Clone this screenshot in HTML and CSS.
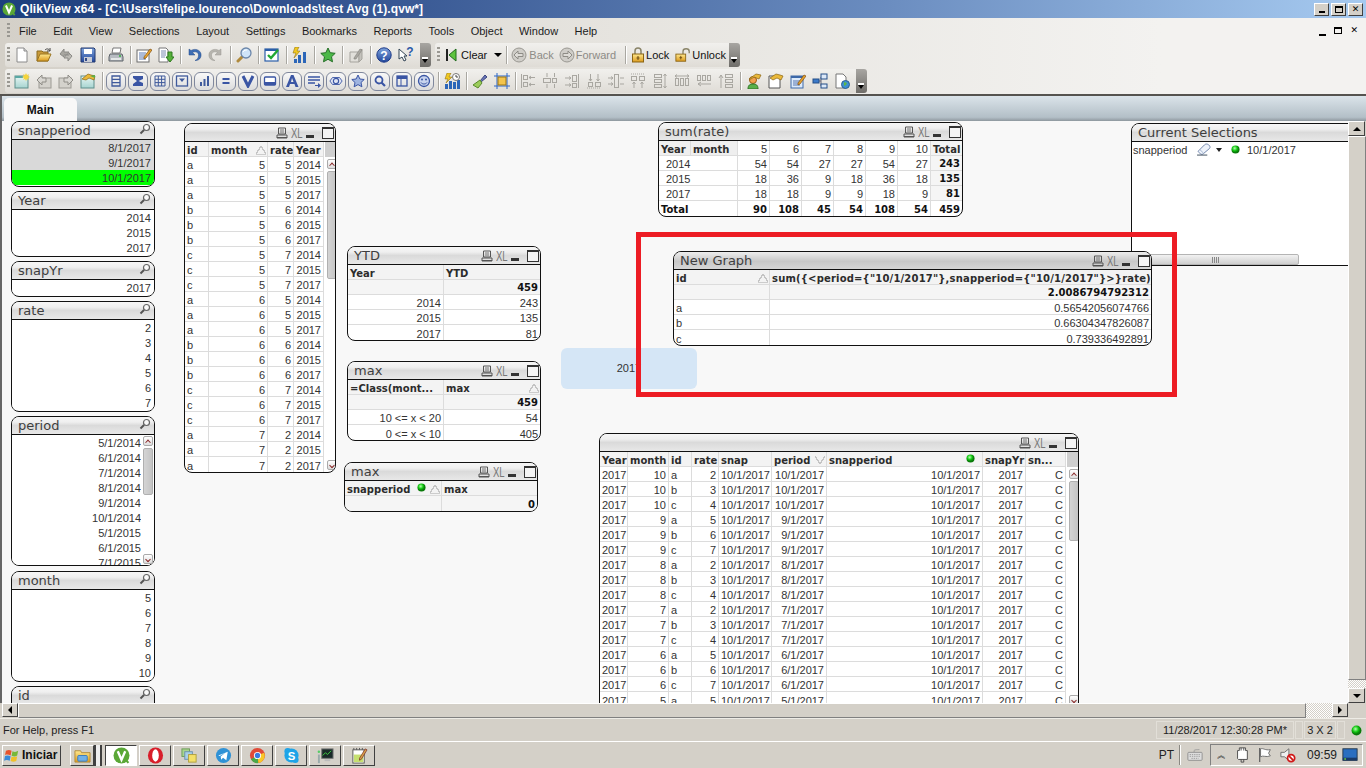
FILE: index.html
```html
<!DOCTYPE html>
<html lang="en">
<head>
<meta charset="utf-8">
<title>QlikView</title>
<link rel="stylesheet" href="styles.css">
</head>
<body>
<svg class="defs" aria-hidden="true">
<defs>
<linearGradient id="gYel" x1="0" y1="0" x2="0" y2="1"><stop offset="0" stop-color="#ffe98f"/><stop offset="1" stop-color="#dc9a1e"/></linearGradient>
<linearGradient id="gBlu" x1="0" y1="0" x2="0" y2="1"><stop offset="0" stop-color="#7fa4dd"/><stop offset="1" stop-color="#22479c"/></linearGradient>
<linearGradient id="gTeal" x1="0" y1="0" x2="0" y2="1"><stop offset="0" stop-color="#e8f6f4"/><stop offset="1" stop-color="#a6d4d0"/></linearGradient>
<symbol id="doc" viewBox="0 0 16 16"><path d="M3 1h7l3 3v11H3z" fill="#fff" stroke="#8a8a8a"/><path d="M10 1v3h3" fill="#ddd" stroke="#8a8a8a"/></symbol>
<symbol id="open" viewBox="0 0 16 16"><path d="M1 4h5l1 1h5v9H1z" fill="#c99a3a" stroke="#8a6a20"/><path d="M1 14l3-7h11l-3 7z" fill="url(#gYel)" stroke="#9a7420"/><path d="M9 3c2-2 4-1 5 1M14 1v3h-3" fill="none" stroke="#444"/></symbol>
<symbol id="sync" viewBox="0 0 16 16"><path d="M2 7l4-5v3h5l-2 3H6v2z" fill="#a8a6a0" stroke="#8b8a86"/><path d="M14 9l-4 5v-3H6l2-3h3V6z" fill="#bdbbb5" stroke="#8b8a86"/></symbol>
<symbol id="save" viewBox="0 0 16 16"><path d="M1 1h13l1 1v13H1z" fill="url(#gBlu)" stroke="#23386e"/><rect x="4" y="2" width="8" height="5" fill="#fff"/><rect x="4" y="10" width="8" height="5" fill="#c8ccd6"/><rect x="5" y="11" width="2" height="3" fill="#334a86"/></symbol>
<symbol id="print" viewBox="0 0 16 16"><path d="M5 1h8l-1 5H4z" fill="#fff" stroke="#777"/><path d="M2 7h12l1 3v4H1v-4z" fill="#b8bcc2" stroke="#5c6268"/><rect x="3" y="11" width="10" height="2" fill="#e5e8e8"/><circle cx="12" cy="9" r="1" fill="#33b13c"/></symbol>
<symbol id="edit" viewBox="0 0 16 16"><rect x="1" y="3" width="12" height="12" fill="#fff" stroke="#6c6c6c"/><path d="M3 6h7M3 8h6M3 10h5M3 12h7" stroke="#5877b0"/><path d="M8 10l6-8 2 1-6 8-2 1z" fill="#e9a42c" stroke="#7a4a12" stroke-width=".7"/></symbol>
<symbol id="docdown" viewBox="0 0 16 16"><path d="M1 1h7l2 2v12H1z" fill="#fff" stroke="#777"/><path d="M3 4h5M3 6h5M3 8h5M3 10h4" stroke="#7a8ab0"/><path d="M10 5h4v5h2l-4 5-4-5h2z" fill="#56b03a" stroke="#2f7a20"/></symbol>
<symbol id="undo" viewBox="0 0 16 16"><path d="M3 2v6h6L6.500 5.500C9 4 13 5 12.500 9c-.2 2-1.500 3.500-3.500 4.500 4 .2 6.500-2.500 6-6.500C14.500 3 9 1 5 3.500z" fill="#3d6db5" stroke="#254a86" stroke-width=".5"/></symbol>
<symbol id="redo" viewBox="0 0 16 16"><path d="M13 2v6H7l2.500-2.500C7 4 3 5 3.500 9c.2 2 1.500 3.500 3.500 4.500-4 .2-6.500-2.500-6-6.500C1.500 3 7 1 11 3.500z" fill="#b6b4ae" stroke="#989690" stroke-width=".5"/></symbol>
<symbol id="find" viewBox="0 0 16 16"><path d="M6 10l-4 4" stroke="#b08a3c" stroke-width="3" stroke-linecap="round"/><circle cx="10" cy="6" r="5" fill="#cfe4f8" stroke="#6b86aa" stroke-width="1.300"/><path d="M7 5c1-2 3-2 4-2" stroke="#fff" fill="none"/></symbol>
<symbol id="check" viewBox="0 0 16 16"><rect x="1" y="2" width="13" height="12" fill="#fff" stroke="#2b5ea8" stroke-width="1.200"/><rect x="1" y="2" width="13" height="2" fill="#2b5ea8"/><path d="M4 8l3 3 7-8" fill="none" stroke="#21a832" stroke-width="2.400"/></symbol>
<symbol id="bars" viewBox="0 0 16 16"><path d="M3 0h4L5 4h3L2 11l2-5H1z" fill="#f0c820" stroke="#94761a" stroke-width=".6"/><rect x="2" y="12" width="3" height="4" fill="#2c66b8"/><rect x="6" y="8" width="3" height="8" fill="#2c66b8"/><rect x="11" y="5" width="3" height="11" fill="#2c66b8"/></symbol>
<symbol id="star" viewBox="0 0 16 16"><path d="M8 1l2.200 4.700 5 .6-3.700 3.500 1 5L8 12.300 3.500 14.800l1-5L.8 6.300l5-.6z" fill="#4cb848" stroke="#246e26"/></symbol>
<symbol id="pencilg" viewBox="0 0 16 16"><path d="M2 5h9v10H2z" fill="#e1dfda" stroke="#a5a39d"/><path d="M11 5l3-3v10l-3 3z" fill="#c4c2bc" stroke="#a5a39d"/><path d="M6 11l6-9 2 1-6 9-2 0z" fill="#aaa8a2" stroke="#85837e" stroke-width=".6"/></symbol>
<symbol id="help" viewBox="0 0 16 16"><circle cx="8" cy="8" r="7.200" fill="url(#gBlu)" stroke="#1d3a88"/><text x="8" y="12.500" font-family="Liberation Sans" font-weight="700" font-size="12" text-anchor="middle" fill="#fff">?</text></symbol>
<symbol id="whatq" viewBox="0 0 16 16"><path d="M1 2v10l3-2 2 4 2-1-2-4h3z" fill="#fff" stroke="#345"/><text x="12" y="9" font-family="Liberation Sans" font-weight="700" font-size="12" text-anchor="middle" fill="#2c5aa8">?</text></symbol>
<symbol id="clearic" viewBox="0 0 16 16"><rect x="3" y="2" width="2" height="12" fill="#222"/><path d="M13 2v12L6 8z" fill="#5ec43e" stroke="#1e6a1c"/></symbol>
<symbol id="backic" viewBox="0 0 16 16"><circle cx="8" cy="8" r="7" fill="#cfcdc8" stroke="#9a9892"/><path d="M3 8l4-4v2.500h5v3H7V12z" fill="#dedcd7" stroke="#8e8c86"/></symbol>
<symbol id="fwdic" viewBox="0 0 16 16"><circle cx="8" cy="8" r="7" fill="#cfcdc8" stroke="#9a9892"/><path d="M13 8L9 4v2.500H4v3h5V12z" fill="#dedcd7" stroke="#8e8c86"/></symbol>
<symbol id="lock" viewBox="0 0 16 16"><path d="M5 7V4c0-4 6-4 6 0v3" fill="none" stroke="#8a8468" stroke-width="1.500"/><rect x="2.500" y="7" width="11" height="8" fill="url(#gYel)" stroke="#8a6414"/><path d="M8 9v4M6.500 11h3" stroke="#6b4a10"/></symbol>
<symbol id="unlock" viewBox="0 0 18 16"><path d="M9 7V4c0-4 7-4 7 0v2" fill="none" stroke="#8a8468" stroke-width="1.500"/><rect x="1" y="7" width="11" height="8" fill="url(#gYel)" stroke="#8a6414"/><path d="M6.500 9v4M5 11h3" stroke="#6b4a10"/></symbol>
<symbol id="shnew" viewBox="0 0 16 16"><rect x="1" y="3" width="13" height="12" fill="url(#gTeal)" stroke="#5f8f8c"/><rect x="1" y="3" width="8" height="2" fill="#5aa8a4"/><path d="M12 0l1 2 2-1-1 2 2 1-2 1 1 2-2-1-1 2-1-2-2 1 1-2-2-1 2-1-1-2 2 1z" fill="#f5d43c"/></symbol>
<symbol id="gleft" viewBox="0 0 16 16"><rect x="3" y="5" width="12" height="10" fill="#d4d2cc" stroke="#9c9a94"/><path d="M1 7l5-5v3h4v4H6v3z" fill="#d9d7d2" stroke="#8f8d87"/></symbol>
<symbol id="gright" viewBox="0 0 16 16"><rect x="1" y="5" width="12" height="10" fill="#d4d2cc" stroke="#9c9a94"/><path d="M15 7l-5-5v3H6v4h4v3z" fill="#d9d7d2" stroke="#8f8d87"/></symbol>
<symbol id="shhand" viewBox="0 0 16 16"><rect x="1" y="3" width="13" height="12" fill="url(#gTeal)" stroke="#5f8f8c"/><path d="M2 6l6-5 3 1 4 1-1 4-5-2-3 2z" fill="#eab93a" stroke="#8a6414" stroke-width=".7"/><path d="M10 3l5-1v3z" fill="#58b04a"/></symbol>
<symbol id="c-list" viewBox="0 0 14 14"><path d="M3 2h8v10H3zM3 5.300h8M3 8.600h8" fill="none" stroke="#3f5a9c" stroke-width="1.300"/></symbol>
<symbol id="c-sum" viewBox="0 0 14 14"><path d="M2 2h10v3L7.500 7 12 9v3H2v-2l4-3-4-3z" fill="#3a55a4"/></symbol>
<symbol id="c-grid" viewBox="0 0 14 14"><path d="M2 2h10v10H2zM2 5.300h10M2 8.600h10M5.300 2v10M8.600 2v10" fill="none" stroke="#3f5a9c"/></symbol>
<symbol id="c-mbox" viewBox="0 0 14 14"><rect x="1.500" y="2" width="11" height="10" fill="none" stroke="#3f5a9c" stroke-width="1.300"/><path d="M4 4.500h6L7 8z" fill="#3f5a9c"/></symbol>
<symbol id="c-chart" viewBox="0 0 14 14"><rect x="3" y="8" width="2" height="4" fill="#3f5a9c"/><rect x="6.500" y="5" width="2" height="7" fill="#3f5a9c"/><rect x="10" y="2" width="2" height="10" fill="#3f5a9c"/></symbol>
<symbol id="c-eq" viewBox="0 0 14 14"><path d="M3.500 5h7M3.500 9h7" stroke="#3a55a4" stroke-width="1.800"/></symbol>
<symbol id="c-v" viewBox="0 0 14 14"><path d="M2 2l5 10 5-10" fill="none" stroke="#3a55a4" stroke-width="3"/></symbol>
<symbol id="c-btn" viewBox="0 0 14 14"><rect x="1.500" y="3" width="11" height="8" rx="1" fill="#fff" stroke="#3a55a4" stroke-width="1.300"/><rect x="1.500" y="8" width="11" height="3" fill="#3a55a4"/></symbol>
<symbol id="c-a" viewBox="0 0 14 14"><path d="M1 13L6 1h2.500l5 12h-3l-1-3H5l-1 3zM6 8h2.500L7 4z" fill="#3a55a4" fill-rule="evenodd"/></symbol>
<symbol id="c-input" viewBox="0 0 14 14"><path d="M1 3h12M1 6h12M1 9h7" stroke="#3a55a4" stroke-width="1.300"/><path d="M8 11h3V9l3 2.500L11 14v-2H8z" fill="#3a55a4"/></symbol>
<symbol id="c-six" viewBox="0 0 16 14"><path d="M1 7l3-4h8l3 4-3 4H4z" fill="#dfe4f4" stroke="#3a55a4"/><circle cx="8" cy="7" r="3" fill="none" stroke="#3a55a4" stroke-width="1.300"/></symbol>
<symbol id="c-star" viewBox="0 0 14 14"><path d="M7 1l1.900 4 4.300.5-3.200 3 .9 4.300L7 10.600l-3.900 2.200.9-4.300-3.200-3 4.300-.5z" fill="#9fb4e0" stroke="#3a55a4"/></symbol>
<symbol id="c-find" viewBox="0 0 14 14"><circle cx="6" cy="6" r="3.500" fill="none" stroke="#3a55a4" stroke-width="1.800"/><path d="M8.500 8.500l3.500 3.500" stroke="#3a55a4" stroke-width="2.200"/></symbol>
<symbol id="c-cont" viewBox="0 0 14 14"><rect x="2" y="2" width="10" height="10" fill="none" stroke="#3a55a4" stroke-width="1.300"/><rect x="2" y="2" width="10" height="3" fill="#3a55a4"/><path d="M6 5v7" stroke="#3a55a4"/></symbol>
<symbol id="c-smile" viewBox="0 0 14 14"><circle cx="7" cy="7" r="5.500" fill="#c8d4ee" stroke="#3a55a4" stroke-width="1.300"/><circle cx="5" cy="5.500" r="1" fill="#3a55a4"/><circle cx="9" cy="5.500" r="1" fill="#3a55a4"/><path d="M4 8.500c1 2 5 2 6 0" fill="none" stroke="#3a55a4"/></symbol>
<symbol id="barsclk" viewBox="0 0 16 16"><path d="M3 0h4L5 4h3L2 10l2-4H1z" fill="#f0c820" stroke="#94761a" stroke-width=".6"/><rect x="1" y="11" width="3" height="5" fill="#2c66b8"/><rect x="5" y="8" width="3" height="8" fill="#2c66b8"/><rect x="9" y="9" width="3" height="7" fill="#2c66b8"/><rect x="13" y="7" width="3" height="9" fill="#2c66b8"/><circle cx="12" cy="4" r="3.500" fill="#fff" stroke="#777"/><path d="M12 2v2h2" stroke="#444" fill="none"/></symbol>
<symbol id="brush" viewBox="0 0 16 16"><path d="M8 8l5-6 2 2-6 5z" fill="#6a76b8" stroke="#3c4680"/><path d="M8 7l2 3-4 5-5-3z" fill="#9ccc5a" stroke="#5a8a2c"/></symbol>
<symbol id="selbox" viewBox="0 0 16 16"><path d="M3 0v16M13 0v16M0 3h16M0 13h16" stroke="#2c66c8"/><rect x="4" y="4" width="8" height="8" fill="#f4c44c" stroke="#9a7414"/></symbol>
<symbol id="a1" viewBox="0 0 16 16"><g fill="none" stroke="#a9a7a1"><path d="M1.500 1v14"/><rect x="3.500" y="2.500" width="4" height="4"/><rect x="3.500" y="9.500" width="4" height="4"/><path d="M15 4.500H9M15 11.500H9M11 3l-2 1.500 2 1.500M11 10l-2 1.500 2 1.500"/></g></symbol>
<symbol id="a2" viewBox="0 0 16 16"><g fill="none" stroke="#a9a7a1"><rect x="1.500" y="5.500" width="7" height="4"/><rect x="10.500" y="5.500" width="4" height="4"/><path d="M5 0v4M12.500 0v4M5 11v4M12.500 11v4"/></g></symbol>
<symbol id="a3" viewBox="0 0 16 16"><g fill="none" stroke="#a9a7a1"><path d="M14.500 1v14"/><rect x="8.500" y="2.500" width="4" height="6"/><rect x="8.500" y="10.500" width="4" height="4"/><path d="M1 5h6M1 12h6M5 3.500L7 5 5 6.500M5 10.500L7 12l-2 1.500"/></g></symbol>
<symbol id="a4" viewBox="0 0 16 16"><g fill="none" stroke="#a9a7a1"><path d="M1 15h14" stroke-dasharray="1 1"/><rect x="2.500" y="9.500" width="4" height="4"/><rect x="9.500" y="9.500" width="5" height="4"/><path d="M4.500 1v7M12 1v7M3 6l1.500 2L6 6M10.500 6L12 8l1.500-2"/></g></symbol>
<symbol id="a5" viewBox="0 0 16 16"><g fill="none" stroke="#a9a7a1"><rect x="6.500" y="1.500" width="4" height="13"/><path d="M0 5h5M0 11h5M3 3.500L5 5 3 6.500M3 9.500L5 11l-2 1.500M12 5h4M12 11h4"/></g></symbol>
<symbol id="a6" viewBox="0 0 16 16"><g fill="none" stroke="#a9a7a1"><path d="M1 1h14" stroke-dasharray="1 1"/><rect x="1.500" y="3.500" width="5" height="4"/><rect x="9.500" y="3.500" width="5" height="4"/><path d="M4 9v6M12 9v6M2.500 11L4 9l1.500 2M10.500 11L12 9l1.500 2"/></g></symbol>
<symbol id="a7" viewBox="0 0 16 16"><g fill="none" stroke="#a9a7a1"><rect x="2.500" y="1.500" width="7" height="3"/><rect x="2.500" y="6.500" width="7" height="3"/><rect x="2.500" y="11.500" width="7" height="3"/><path d="M13 1v14M11.500 3L13 1l1.500 2M11.500 13l1.500 2 1.500-2"/></g></symbol>
<symbol id="a8" viewBox="0 0 16 16"><g fill="none" stroke="#a9a7a1"><rect x="1.500" y="5.500" width="3" height="7"/><rect x="6.500" y="5.500" width="3" height="7"/><rect x="11.500" y="5.500" width="3" height="7"/><path d="M1 3h14M3 1.500L1 3l2 1.500M13 1.500L15 3l-2 1.500"/></g></symbol>
<symbol id="a9" viewBox="0 0 16 16"><g fill="none" stroke="#a9a7a1"><rect x="1.500" y="2.500" width="3" height="5"/><rect x="6.500" y="2.500" width="3" height="5"/><rect x="11.500" y="2.500" width="3" height="5"/><path d="M15 11H2M5 9l-3 2 3 2"/></g></symbol>
<symbol id="a10" viewBox="0 0 16 16"><g fill="none" stroke="#a9a7a1"><rect x="7.500" y="1.500" width="7" height="3"/><rect x="7.500" y="6.500" width="7" height="3"/><rect x="7.500" y="11.500" width="7" height="3"/><path d="M3 15V2M1 5l2-3 2 3"/></g></symbol>
<symbol id="user" viewBox="0 0 16 16"><circle cx="7" cy="7" r="3.500" fill="#f2a14e" stroke="#9a5a14"/><path d="M2 16c0-4 2-5 5-5s5 1 5 5z" fill="#58b04a" stroke="#2e7424"/><path d="M3 6l7-5 5 1-2 4-5-2-3 2z" fill="#eab93a" stroke="#8a6414" stroke-width=".7"/></symbol>
<symbol id="dochand" viewBox="0 0 16 16"><path d="M1 3h11v12H1z" fill="#fff" stroke="#555"/><path d="M2 5l6-4 4 1 3 1-2 4-4-2-4 2z" fill="#eab93a" stroke="#8a6414" stroke-width=".7"/></symbol>
<symbol id="note" viewBox="0 0 16 16"><rect x="1" y="3" width="12" height="12" fill="#dceafa" stroke="#3c68a8"/><rect x="1" y="3" width="12" height="2" fill="#3c68a8"/><path d="M3 8h7M3 10h6M3 12h7" stroke="#5877b0"/><path d="M8 10l6-8 2 1-6 8-2 1z" fill="#e9a42c" stroke="#7a4a12" stroke-width=".7"/></symbol>
<symbol id="netw" viewBox="0 0 16 16"><path d="M5 8h4M9 4v9" stroke="#667"/><rect x="1" y="6" width="6" height="4" fill="#3c7ac8" stroke="#244e88"/><rect x="9" y="1" width="6" height="5" fill="#dce8f8" stroke="#244e88"/><rect x="9" y="11" width="6" height="4" fill="#dce8f8" stroke="#244e88"/></symbol>
<symbol id="docglobe" viewBox="0 0 16 16"><path d="M2 1h7l3 3v11H2z" fill="#fff" stroke="#777"/><circle cx="11.500" cy="11.500" r="4" fill="#3d8fd2" stroke="#2a6090"/><path d="M10 9l3 1-1 2-2 1z" fill="#5cb848"/></symbol>
<symbol id="lens" viewBox="0 0 12 12"><circle cx="7.500" cy="4.500" r="3" fill="#fafafa" stroke="#666" stroke-width="1.200"/><path d="M5 7L1.500 10.500" stroke="#555" stroke-width="2"/></symbol>
<symbol id="printer" viewBox="0 0 12 12"><path d="M2.500 1h7v6h-7zM1 10.500h10M1 8h10v3H1z" fill="none" stroke="#555"/><path d="M4 3h4M4 5h4" stroke="#777"/></symbol>
<symbol id="qv" viewBox="0 0 16 16"><circle cx="8" cy="8" r="7.500" fill="#5aa736"/><path d="M4.500 4l3.500 8 3.500-8" fill="none" stroke="#fff" stroke-width="2.200"/><path d="M12 12l2.500 3" stroke="#5aa736" stroke-width="2"/></symbol>
<symbol id="erase" viewBox="0 0 16 14"><path d="M1.500 8.500L8 2c1.200-1.200 3-1.200 4.500 0s2 2.800.8 4L6.800 11.500c-1 1-2.300 1-3.300 0s-3-2-2-3z" fill="#eef3fb" stroke="#6a80a8"/><path d="M3 7l4 4" stroke="#9fb0cc"/><path d="M0 13h11" stroke="#345"/></symbol>
<symbol id="winlogo" viewBox="0 0 18 16"><path d="M2 3c3-1.500 4-1 6 0L7 8C5 7 3 6.500 1 7.500z" fill="#e8542c"/><path d="M9 3.500c2 1 4 1 6-.5l-1 5c-2 1.500-4 1-6 .2z" fill="#78b838"/><path d="M1 8.500c2-1 4-.7 6 .2l-1 5c-2-1-4-1.200-6 0z" fill="#3a8ad8"/><path d="M8 9c2 1 4 1 6-.2l-1 5c-2 1-4 1.200-6 0z" fill="#f0c028"/></symbol>
<symbol id="folder" viewBox="0 0 18 18"><path d="M1 4h6l1 2h9v10H1z" fill="url(#gYel)" stroke="#b08a3a"/><rect x="4" y="9" width="10" height="6" rx="1" fill="#70b0e8" stroke="#3a7ab8"/></symbol>
<symbol id="opera" viewBox="0 0 18 18"><ellipse cx="9" cy="9" rx="8" ry="8.500" fill="#d81e2a"/><ellipse cx="9" cy="9" rx="3.500" ry="6.500" fill="#fff"/></symbol>
<symbol id="cards" viewBox="0 0 18 18"><rect x="1" y="2" width="8" height="8" fill="#a8d48c" stroke="#6a9c58"/><rect x="4" y="5" width="8" height="8" fill="#a8d0e8" stroke="#6a90ac"/><rect x="8" y="8" width="8" height="8" fill="#f4e068" stroke="#b0a040"/></symbol>
<symbol id="tg" viewBox="0 0 18 18"><circle cx="9" cy="9" r="8" fill="#2f92d6"/><path d="M3.500 9l10-4-1.500 9-3.500-2.500-2 2-.5-3.500 5-4-6 3.500z" fill="#fff"/></symbol>
<symbol id="chrome" viewBox="0 0 18 18"><circle cx="9" cy="9" r="8" fill="#e04a38"/><path d="M9 9L2 13a8 8 0 0 0 8 4z" fill="#4aa84a"/><path d="M9 9l7-3a8 8 0 0 1-6 11z" fill="#f8c828"/><circle cx="9" cy="9" r="3.800" fill="#fff"/><circle cx="9" cy="9" r="2.800" fill="#3a7ae0"/></symbol>
<symbol id="skype" viewBox="0 0 18 18"><circle cx="9" cy="9" r="7.500" fill="#1ea4e8"/><circle cx="5" cy="4.500" r="3.500" fill="#1ea4e8"/><circle cx="13" cy="13.500" r="3.500" fill="#1ea4e8"/><text x="9" y="13.500" font-family="Liberation Sans" font-weight="700" font-size="12" text-anchor="middle" fill="#fff">S</text></symbol>
<symbol id="mon" viewBox="0 0 18 18"><rect x="5" y="2" width="12" height="10" fill="#1a2a28" stroke="#777"/><path d="M6 9l3-3 2 2 4-4" stroke="#40d040" fill="none"/><rect x="8" y="13" width="6" height="2" fill="#bbb"/><rect x="1" y="8" width="2" height="9" fill="#9aa"/><circle cx="2" cy="5" r="1.300" fill="#5c6"/></symbol>
<symbol id="pad" viewBox="0 0 18 18"><rect x="2" y="3" width="12" height="14" fill="#fff" stroke="#555"/><path d="M3 3v-2M6 3v-2M9 3v-2M12 3v-2" stroke="#555"/><rect x="3" y="8" width="10" height="8" fill="#c6e070"/><path d="M9 12l6-10 2 1-6 10-2 1z" fill="#d8a048" stroke="#702020" stroke-width=".7"/></symbol>
<symbol id="kbd" viewBox="0 0 18 14"><path d="M8 4V2c0-1 4-1 6-1" fill="none" stroke="#999"/><rect x="1" y="4" width="16" height="9" rx="1" fill="#ddd" stroke="#8c8c8c"/><path d="M3 6.500h12M3 8.500h12M5 10.800h8" stroke="#999" stroke-dasharray="1.500 1"/></symbol>
<symbol id="plug" viewBox="0 0 16 18"><path d="M5 1h7v3h2v10H4l-1-1V4h2z" fill="#fff" stroke="#444"/><path d="M7 1v3M10 1v3M7 14v3h3v-3" stroke="#444" fill="none"/></symbol>
<symbol id="flag" viewBox="0 0 16 18"><path d="M2 1v16" stroke="#666" stroke-width="1.500"/><path d="M3 2c3-1 5 2 11 1l-2 4 2 3c-5 2-8-1-11 1z" fill="#fff" stroke="#666"/></symbol>
<symbol id="spk" viewBox="0 0 18 18"><path d="M1 6h4l5-4v13L5 11H1z" fill="#eee" stroke="#666"/><circle cx="12.500" cy="12.500" r="4" fill="#fff" stroke="#d01818" stroke-width="2"/><path d="M10 10l5 5" stroke="#d01818" stroke-width="2"/></symbol>
<symbol id="desk" viewBox="0 0 18 16"><rect x="1" y="1" width="16" height="13" fill="#2a6ec0" stroke="#234"/><rect x="1" y="11" width="16" height="3" fill="#1a3a68"/><circle cx="3.500" cy="12.500" r="1" fill="#6c4"/></symbol>
<radialGradient id="gLed" cx=".4" cy=".35"><stop offset="0" stop-color="#b8ffb0"/><stop offset=".6" stop-color="#12c812"/><stop offset="1" stop-color="#0a7a0a"/></radialGradient>
<symbol id="led" viewBox="0 0 10 10"><circle cx="5" cy="5" r="4.500" fill="url(#gLed)"/></symbol>
</defs>
</svg>

<header class="titlebar">
  <svg class="tb-logo"><use href="#qv"/></svg>
  <span class="tb-text">QlikView x64 - [C:\Users\felipe.lourenco\Downloads\test Avg (1).qvw*]</span>
  <div class="winbtns">
    <button class="wb"><span class="g-min"></span></button>
    <button class="wb"><span class="g-rest"></span></button>
    <button class="wb"><span class="g-x">✕</span></button>
  </div>
</header>

<div class="chrome">
  <nav class="menubar">
    <span class="grip"></span>
    <span class="mi">File</span><span class="mi">Edit</span><span class="mi">View</span><span class="mi">Selections</span><span class="mi">Layout</span><span class="mi">Settings</span><span class="mi">Bookmarks</span><span class="mi">Reports</span><span class="mi">Tools</span><span class="mi">Object</span><span class="mi">Window</span><span class="mi">Help</span>
    <div class="mdi"><span class="g-min"></span><span class="g-rest"></span><span class="g-x">✕</span></div>
  </nav>

  <div class="toolrow">
    <div class="pill">
      <span class="grip"></span>
      <svg class="i"><use href="#doc"/></svg><svg class="i"><use href="#open"/></svg><svg class="i"><use href="#sync"/></svg><svg class="i"><use href="#save"/></svg><span class="sep"></span>
      <svg class="i"><use href="#print"/></svg><span class="sep"></span>
      <svg class="i"><use href="#edit"/></svg><svg class="i"><use href="#docdown"/></svg><span class="sep"></span>
      <svg class="i"><use href="#undo"/></svg><svg class="i"><use href="#redo"/></svg><span class="sep"></span>
      <svg class="i"><use href="#find"/></svg><span class="sep"></span>
      <svg class="i"><use href="#check"/></svg><span class="sep"></span>
      <svg class="i"><use href="#bars"/></svg><span class="sep"></span>
      <svg class="i"><use href="#star"/></svg><span class="sep"></span>
      <svg class="i"><use href="#pencilg"/></svg><span class="sep"></span>
      <svg class="i"><use href="#help"/></svg><svg class="i"><use href="#whatq"/></svg>
      <span class="chip"></span>
    </div>
    <div class="pill p2">
      <span class="grip"></span>
      <svg class="i"><use href="#clearic"/></svg><span class="tl">Clear</span><span class="darr"></span><span class="sep"></span>
      <svg class="i"><use href="#backic"/></svg><span class="tl dim t-back">Back</span>
      <svg class="i"><use href="#fwdic"/></svg><span class="tl dim t-fwd">Forward</span><span class="sep"></span>
      <svg class="i"><use href="#lock"/></svg><span class="tl t-lock">Lock</span>
      <svg class="i"><use href="#unlock"/></svg><span class="tl t-unlock">Unlock</span>
      <span class="chip"></span>
    </div>
  </div>

  <div class="toolrow last">
    <div class="pill">
      <span class="grip"></span>
      <svg class="i"><use href="#shnew"/></svg><svg class="i"><use href="#gleft"/></svg><svg class="i"><use href="#gright"/></svg><svg class="i"><use href="#shhand"/></svg><span class="sep"></span>
      <span class="cb"><svg><use href="#c-list"/></svg></span><span class="cb"><svg><use href="#c-sum"/></svg></span><span class="cb"><svg><use href="#c-grid"/></svg></span><span class="cb"><svg><use href="#c-mbox"/></svg></span><span class="cb"><svg><use href="#c-chart"/></svg></span><span class="cb"><svg><use href="#c-eq"/></svg></span><span class="cb"><svg><use href="#c-v"/></svg></span><span class="cb"><svg><use href="#c-btn"/></svg></span><span class="cb"><svg><use href="#c-a"/></svg></span><span class="cb"><svg><use href="#c-input"/></svg></span><span class="cb"><svg><use href="#c-six"/></svg></span><span class="cb"><svg><use href="#c-star"/></svg></span><span class="cb"><svg><use href="#c-find"/></svg></span><span class="cb"><svg><use href="#c-cont"/></svg></span><span class="cb"><svg><use href="#c-smile"/></svg></span>
      <span class="sep"></span>
      <svg class="i"><use href="#barsclk"/></svg><span class="sep"></span>
      <svg class="i"><use href="#brush"/></svg><svg class="i"><use href="#selbox"/></svg><span class="sep tight"></span>
      <svg class="i"><use href="#a1"/></svg><svg class="i"><use href="#a2"/></svg><svg class="i"><use href="#a3"/></svg><svg class="i"><use href="#a4"/></svg><svg class="i"><use href="#a5"/></svg><svg class="i"><use href="#a6"/></svg><svg class="i"><use href="#a7"/></svg><svg class="i"><use href="#a8"/></svg><svg class="i"><use href="#a9"/></svg><svg class="i"><use href="#a10"/></svg><span class="sep"></span>
      <svg class="i"><use href="#user"/></svg><svg class="i"><use href="#dochand"/></svg><svg class="i"><use href="#note"/></svg><svg class="i"><use href="#netw"/></svg><svg class="i"><use href="#docglobe"/></svg>
      <span class="chip"></span>
    </div>
  </div>
</div>

<div class="tabstrip"><div class="tab">Main</div></div>

<main class="work">
  <div class="canvas">

    <section class="obj lb o-sp"><div class="cap"><span class="capt">snapperiod</span><svg class="lens"><use href="#lens"/></svg></div>
      <div class="rows"><div class="li alt">8/1/2017</div><div class="li alt">9/1/2017</div><div class="li sel">10/1/2017</div></div></section>
    <section class="obj lb o-yr"><div class="cap"><span class="capt">Year</span><svg class="lens"><use href="#lens"/></svg></div>
      <div class="rows"><div class="li">2014</div><div class="li">2015</div><div class="li">2017</div></div></section>
    <section class="obj lb o-sy"><div class="cap"><span class="capt">snapYr</span><svg class="lens"><use href="#lens"/></svg></div>
      <div class="rows"><div class="li">2017</div></div></section>
    <section class="obj lb o-rt"><div class="cap"><span class="capt">rate</span><svg class="lens"><use href="#lens"/></svg></div>
      <div class="rows"><div class="li">2</div><div class="li">3</div><div class="li">4</div><div class="li">5</div><div class="li">6</div><div class="li">7</div></div></section>
    <section class="obj lb o-pd"><div class="cap"><span class="capt">period</span><svg class="lens"><use href="#lens"/></svg></div>
      <div class="rows scr"><div class="li">5/1/2014</div><div class="li">6/1/2014</div><div class="li">7/1/2014</div><div class="li">8/1/2014</div><div class="li">9/1/2014</div><div class="li">10/1/2014</div><div class="li">5/1/2015</div><div class="li">6/1/2015</div><div class="li">7/1/2015</div>
      <div class="lbar"><span class="sb-b up"></span><span class="sb-th h47"></span><span class="sb-b dn"></span></div></div></section>
    <section class="obj lb o-mn"><div class="cap"><span class="capt">month</span><svg class="lens"><use href="#lens"/></svg></div>
      <div class="rows"><div class="li">5</div><div class="li">6</div><div class="li">7</div><div class="li">8</div><div class="li">9</div><div class="li">10</div></div></section>
    <section class="obj lb o-id"><div class="cap"><span class="capt">id</span><svg class="lens"><use href="#lens"/></svg></div></section>

    <section class="obj o-t1"><div class="cap"><span class="ctl"><svg class="pr"><use href="#printer"/></svg><span class="xl">XL</span><span class="mn"></span><span class="mx"></span></span></div>
      <div class="split">
        <table class="tb">
          <colgroup><col class="w24"><col class="w59"><col class="w26"><col class="w30"></colgroup>
          <tr class="hd"><th>id</th><th>month<span class="sort"></span></th><th>rate</th><th>Year</th></tr>
          <tr><td>a</td><td class="r">5</td><td class="r">5</td><td class="r">2014</td></tr>
          <tr><td>a</td><td class="r">5</td><td class="r">5</td><td class="r">2015</td></tr>
          <tr><td>a</td><td class="r">5</td><td class="r">5</td><td class="r">2017</td></tr>
          <tr><td>b</td><td class="r">5</td><td class="r">6</td><td class="r">2014</td></tr>
          <tr><td>b</td><td class="r">5</td><td class="r">6</td><td class="r">2015</td></tr>
          <tr><td>b</td><td class="r">5</td><td class="r">6</td><td class="r">2017</td></tr>
          <tr><td>c</td><td class="r">5</td><td class="r">7</td><td class="r">2014</td></tr>
          <tr><td>c</td><td class="r">5</td><td class="r">7</td><td class="r">2015</td></tr>
          <tr><td>c</td><td class="r">5</td><td class="r">7</td><td class="r">2017</td></tr>
          <tr><td>a</td><td class="r">6</td><td class="r">5</td><td class="r">2014</td></tr>
          <tr><td>a</td><td class="r">6</td><td class="r">5</td><td class="r">2015</td></tr>
          <tr><td>a</td><td class="r">6</td><td class="r">5</td><td class="r">2017</td></tr>
          <tr><td>b</td><td class="r">6</td><td class="r">6</td><td class="r">2014</td></tr>
          <tr><td>b</td><td class="r">6</td><td class="r">6</td><td class="r">2015</td></tr>
          <tr><td>b</td><td class="r">6</td><td class="r">6</td><td class="r">2017</td></tr>
          <tr><td>c</td><td class="r">6</td><td class="r">7</td><td class="r">2014</td></tr>
          <tr><td>c</td><td class="r">6</td><td class="r">7</td><td class="r">2015</td></tr>
          <tr><td>c</td><td class="r">6</td><td class="r">7</td><td class="r">2017</td></tr>
          <tr><td>a</td><td class="r">7</td><td class="r">2</td><td class="r">2014</td></tr>
          <tr><td>a</td><td class="r">7</td><td class="r">2</td><td class="r">2015</td></tr>
          <tr><td>a</td><td class="r">7</td><td class="r">2</td><td class="r">2017</td></tr>
        </table>
        <div class="vbar"><span class="vhd"></span><span class="sb-b up"></span><span class="sb-th h108"></span><span class="sb-b dn"></span></div>
      </div></section>

    <section class="obj o-ytd"><div class="cap"><span class="capt">YTD</span><span class="ctl"><svg class="pr"><use href="#printer"/></svg><span class="xl">XL</span><span class="mn"></span><span class="mx"></span></span></div>
      <table class="tb fill"><colgroup><col class="w96"><col></colgroup>
        <tr class="hd"><th>Year</th><th>YTD</th></tr>
        <tr class="tot"><td></td><td class="r b">459</td></tr>
        <tr><td class="r">2014</td><td class="r">243</td></tr>
        <tr><td class="r">2015</td><td class="r">135</td></tr>
        <tr><td class="r">2017</td><td class="r">81</td></tr>
      </table></section>

    <section class="obj o-max"><div class="cap"><span class="capt">max</span><span class="ctl"><svg class="pr"><use href="#printer"/></svg><span class="xl">XL</span><span class="mn"></span><span class="mx"></span></span></div>
      <table class="tb fill"><colgroup><col class="w96"><col></colgroup>
        <tr class="hd"><th>=Class(mont...</th><th>max<span class="sort"></span></th></tr>
        <tr class="tot"><td></td><td class="r b">459</td></tr>
        <tr><td class="r">10 &lt;= x &lt; 20</td><td class="r">54</td></tr>
        <tr><td class="r">0 &lt;= x &lt; 10</td><td class="r">405</td></tr>
      </table></section>

    <section class="obj o-max2"><div class="cap"><span class="capt">max</span><span class="ctl"><svg class="pr"><use href="#printer"/></svg><span class="xl">XL</span><span class="mn"></span><span class="mx"></span></span></div>
      <table class="tb fill"><colgroup><col class="w97"><col></colgroup>
        <tr class="hd"><th>snapperiod<svg class="hled"><use href="#led"/></svg><span class="sort"></span></th><th>max</th></tr>
        <tr class="tot"><td></td><td class="r b">0</td></tr>
      </table></section>

    <div class="blue">2017</div>

    <section class="obj o-sum"><div class="cap"><span class="capt">sum(rate)</span><span class="ctl"><svg class="pr"><use href="#printer"/></svg><span class="xl">XL</span><span class="mn"></span><span class="mx"></span></span></div>
      <table class="tb fill"><colgroup><col class="w32"><col class="w47"><col class="w32"><col class="w32"><col class="w32"><col class="w32"><col class="w32"><col class="w33"><col></colgroup>
        <tr class="hd pv"><th>Year</th><th>month</th><td class="r">5</td><td class="r">6</td><td class="r">7</td><td class="r">8</td><td class="r">9</td><td class="r">10</td><th class="r">Total</th></tr>
        <tr><td colspan="2" class="ind">2014</td><td class="r">54</td><td class="r">54</td><td class="r">27</td><td class="r">27</td><td class="r">54</td><td class="r">27</td><td class="r b sh">243</td></tr>
        <tr><td colspan="2" class="ind">2015</td><td class="r">18</td><td class="r">36</td><td class="r">9</td><td class="r">18</td><td class="r">36</td><td class="r">18</td><td class="r b sh">135</td></tr>
        <tr><td colspan="2" class="ind">2017</td><td class="r">18</td><td class="r">18</td><td class="r">9</td><td class="r">9</td><td class="r">18</td><td class="r">9</td><td class="r b sh">81</td></tr>
        <tr><td colspan="2" class="b">Total</td><td class="r b">90</td><td class="r b">108</td><td class="r b">45</td><td class="r b">54</td><td class="r b">108</td><td class="r b">54</td><td class="r b">459</td></tr>
      </table></section>

    <section class="obj o-cs"><div class="cap"><span class="capt">Current Selections</span></div>
      <div class="csbody">
        <div class="csrow"><span class="csf">snapperiod</span><svg class="cse"><use href="#erase"/></svg><span class="csa"></span><svg class="csl"><use href="#led"/></svg><span>10/1/2017</span></div>
        <div class="cshs"><span class="csth"><span class="hgrip"></span></span></div>
      </div></section>

    <section class="obj o-ng"><div class="cap act"><span class="capt">New Graph</span><span class="ctl"><svg class="pr"><use href="#printer"/></svg><span class="xl">XL</span><span class="mn"></span><span class="mx"></span></span></div>
      <table class="tb fill"><colgroup><col class="w96"><col></colgroup>
        <tr class="hd"><th>id<span class="sort"></span></th><th class="wide">sum({&lt;period={"10/1/2017"},snapperiod={"10/1/2017"}&gt;}rate)</th></tr>
        <tr class="tot"><td></td><td class="r b">2.0086794792312</td></tr>
        <tr><td>a</td><td class="r">0.56542056074766</td></tr>
        <tr><td>b</td><td class="r">0.66304347826087</td></tr>
        <tr><td>c</td><td class="r">0.739336492891</td></tr>
      </table></section>

    <section class="obj o-big"><div class="cap"><span class="ctl"><svg class="pr"><use href="#printer"/></svg><span class="xl">XL</span><span class="mn"></span><span class="mx"></span></span></div>
      <div class="split">
        <table class="tb">
          <colgroup><col class="w28"><col class="w41"><col class="w23"><col class="w27"><col class="w53"><col class="w55"><col class="w156"><col class="w43"><col class="w40"></colgroup>
          <tr class="hd"><th>Year</th><th>month</th><th>id</th><th>rate</th><th>snap</th><th>period<span class="sort dn"></span></th><th>snapperiod<svg class="hled end"><use href="#led"/></svg></th><th>snapYr</th><th>sn...</th></tr>
          <tr><td class="r">2017</td><td class="r">10</td><td>a</td><td class="r">2</td><td class="r">10/1/2017</td><td class="r">10/1/2017</td><td class="r">10/1/2017</td><td class="r">2017</td><td class="r">C</td></tr>
          <tr><td class="r">2017</td><td class="r">10</td><td>b</td><td class="r">3</td><td class="r">10/1/2017</td><td class="r">10/1/2017</td><td class="r">10/1/2017</td><td class="r">2017</td><td class="r">C</td></tr>
          <tr><td class="r">2017</td><td class="r">10</td><td>c</td><td class="r">4</td><td class="r">10/1/2017</td><td class="r">10/1/2017</td><td class="r">10/1/2017</td><td class="r">2017</td><td class="r">C</td></tr>
          <tr><td class="r">2017</td><td class="r">9</td><td>a</td><td class="r">5</td><td class="r">10/1/2017</td><td class="r">9/1/2017</td><td class="r">10/1/2017</td><td class="r">2017</td><td class="r">C</td></tr>
          <tr><td class="r">2017</td><td class="r">9</td><td>b</td><td class="r">6</td><td class="r">10/1/2017</td><td class="r">9/1/2017</td><td class="r">10/1/2017</td><td class="r">2017</td><td class="r">C</td></tr>
          <tr><td class="r">2017</td><td class="r">9</td><td>c</td><td class="r">7</td><td class="r">10/1/2017</td><td class="r">9/1/2017</td><td class="r">10/1/2017</td><td class="r">2017</td><td class="r">C</td></tr>
          <tr><td class="r">2017</td><td class="r">8</td><td>a</td><td class="r">2</td><td class="r">10/1/2017</td><td class="r">8/1/2017</td><td class="r">10/1/2017</td><td class="r">2017</td><td class="r">C</td></tr>
          <tr><td class="r">2017</td><td class="r">8</td><td>b</td><td class="r">3</td><td class="r">10/1/2017</td><td class="r">8/1/2017</td><td class="r">10/1/2017</td><td class="r">2017</td><td class="r">C</td></tr>
          <tr><td class="r">2017</td><td class="r">8</td><td>c</td><td class="r">4</td><td class="r">10/1/2017</td><td class="r">8/1/2017</td><td class="r">10/1/2017</td><td class="r">2017</td><td class="r">C</td></tr>
          <tr><td class="r">2017</td><td class="r">7</td><td>a</td><td class="r">2</td><td class="r">10/1/2017</td><td class="r">7/1/2017</td><td class="r">10/1/2017</td><td class="r">2017</td><td class="r">C</td></tr>
          <tr><td class="r">2017</td><td class="r">7</td><td>b</td><td class="r">3</td><td class="r">10/1/2017</td><td class="r">7/1/2017</td><td class="r">10/1/2017</td><td class="r">2017</td><td class="r">C</td></tr>
          <tr><td class="r">2017</td><td class="r">7</td><td>c</td><td class="r">4</td><td class="r">10/1/2017</td><td class="r">7/1/2017</td><td class="r">10/1/2017</td><td class="r">2017</td><td class="r">C</td></tr>
          <tr><td class="r">2017</td><td class="r">6</td><td>a</td><td class="r">5</td><td class="r">10/1/2017</td><td class="r">6/1/2017</td><td class="r">10/1/2017</td><td class="r">2017</td><td class="r">C</td></tr>
          <tr><td class="r">2017</td><td class="r">6</td><td>b</td><td class="r">6</td><td class="r">10/1/2017</td><td class="r">6/1/2017</td><td class="r">10/1/2017</td><td class="r">2017</td><td class="r">C</td></tr>
          <tr><td class="r">2017</td><td class="r">6</td><td>c</td><td class="r">7</td><td class="r">10/1/2017</td><td class="r">6/1/2017</td><td class="r">10/1/2017</td><td class="r">2017</td><td class="r">C</td></tr>
          <tr><td class="r">2017</td><td class="r">5</td><td>a</td><td class="r">5</td><td class="r">10/1/2017</td><td class="r">5/1/2017</td><td class="r">10/1/2017</td><td class="r">2017</td><td class="r">C</td></tr>
        </table>
        <div class="vbar"><span class="vhd"></span><span class="sb-b up"></span><span class="sb-th h60"></span><span class="sb-b dn"></span></div>
      </div></section>

    <div class="redbox"></div>
  </div>
  <div class="vscroll"><span class="wbtn"><span class="au"></span></span><span class="wth"></span><span class="hatch"></span><span class="wbtn"><span class="ad"></span></span></div>
  <div class="hscroll"><span class="wbtn"><span class="al"></span></span><span class="wth"></span><span class="hatch"></span><span class="wbtn"><span class="ar"></span></span></div>
  <div class="corner"></div>
</main>

<footer class="status">
  <span class="st-help">For Help, press F1</span>
  <span class="cell c-date">11/28/2017 12:30:28 PM*</span><span class="cell c-gap"></span><span class="cell c-dim">3 X 2</span><span class="cell c-gap"></span>
  <svg class="st-led"><use href="#led"/></svg>
</footer>

<div class="taskbar">
  <button class="start"><svg class="s-logo"><use href="#winlogo"/></svg><b>Iniciar</b></button>
  <span class="tsep"></span>
  <span class="tk folder"><svg><use href="#folder"/></svg></span><span class="tk-edge"></span>
  <span class="tk on"><svg><use href="#qv"/></svg></span>
  <span class="tk"><svg><use href="#opera"/></svg></span>
  <span class="tk"><svg><use href="#cards"/></svg></span>
  <span class="tk"><svg><use href="#tg"/></svg></span>
  <span class="tk"><svg><use href="#chrome"/></svg></span>
  <span class="tk"><svg><use href="#skype"/></svg></span>
  <span class="tk"><svg><use href="#mon"/></svg></span>
  <span class="tk"><svg><use href="#pad"/></svg></span>
  <span class="lang">PT</span><span class="vsep"></span>
  <svg class="kbd"><use href="#kbd"/></svg>
  <div class="tray">
    <span class="chev">︽</span>
    <svg class="ti"><use href="#plug"/></svg><svg class="ti"><use href="#flag"/></svg><svg class="ti"><use href="#spk"/></svg>
    <span class="clock">09:59</span>
    <svg class="ti dsk"><use href="#desk"/></svg>
  </div>
</div>
</body>
</html>
```

FILE: styles.css
```css
* { box-sizing: border-box; }
html, body { margin: 0; padding: 0; }
body {
  width: 1366px; height: 768px; overflow: hidden;
  display: flex; flex-direction: column;
  font-family: "Liberation Sans", Arial, sans-serif; font-size: 11px; color: #222;
  background: #d4d0c8;
}
.defs { position: absolute; width: 0; height: 0; }

/* title */
.titlebar {
  height: 18px; display: flex; align-items: center; padding: 0 3px 0 2px;
  background: linear-gradient(90deg, #1d3f7d 0, #3a5a95 30%, #6b8dc0 65%, #a6caf0 100%);
}
.tb-logo { width: 14px; height: 14px; margin-right: 4px; }
.tb-text { color: #fff; font: 700 12px "Liberation Sans", sans-serif; white-space: nowrap; letter-spacing: .1px; }
.winbtns { margin-left: auto; display: flex; gap: 2px; }
.wb {
  width: 15px; height: 13px; padding: 0; background: #d4d0c8; display: flex; align-items: center; justify-content: center;
  border: 1px solid; border-color: #fff #404040 #404040 #fff; position: relative;
}
.g-min { display: block; width: 6px; height: 2px; background: #000; margin-top: 6px; }
.g-rest { display: block; width: 8px; height: 7px; border: 1px solid #000; border-top-width: 2px; position: relative; }
.g-x { font: 700 9px/9px "DejaVu Sans", sans-serif; color: #000; }

/* menu + toolbars */
.chrome {
  height: 78px; border-bottom: 2px solid #55534f; flex: none;
  background: linear-gradient(90deg, #d4d0c8 0, #e6e4df 45%, #f3f2f0 85%);
}
.menubar { height: 24px; display: flex; align-items: center; padding: 1px 0 0 6px; color: #1c1c1c; }
.grip { width: 3px; height: 16px; margin: 0 1px 0 2px; background: repeating-linear-gradient(#9a9892 0 2px, transparent 2px 4px); flex: none; }
.menubar .grip { margin: 0 9px 0 1px; }
.mi { margin-right: 16.500px; font-size: 11px; white-space: nowrap; }
.mdi { margin-left: auto; display: flex; gap: 8px; align-items: center; padding-right: 8px; }
.mdi .g-min { margin-top: 8px; width: 7px; }
.toolrow { height: 26px; display: flex; align-items: center; padding-left: 5px; }
.pill {
  height: 24px; display: flex; align-items: center; border-radius: 3px;
  background: linear-gradient(#f1f0ed, #dfdcd6);
}
.p2 { margin-left: 4px; }
.i { width: 16px; height: 16px; margin: 0 3px; flex: none; }
.p2 .i { margin: 0 2px; }
.sep { width: 1px; height: 18px; background: #a9a7a1; box-shadow: 1px 0 #fff; margin: 0 2.500px; flex: none; }
.sep.tight { margin: 0 1.500px; }
.chip {
  width: 11px; height: 24px; margin-left: 3px; border-radius: 0 3px 3px 0; position: relative;
  background: linear-gradient(#a8a6a2, #6f6d69); flex: none;
}
.chip::after {
  content: ""; position: absolute; left: 2px; bottom: 4px; border: 3.500px solid transparent; border-bottom: 0;
  border-top: 4px solid #000; box-shadow: 0 -2px 0 #fff;
}
.tl { font-size: 11px; white-space: nowrap; color: #111; }
.dim { color: #8d8b86; }
.t-back { margin-right: 3px; }
.t-fwd { margin: 0 6px 0 -1px; }
.t-lock { margin: 0 4px 0 -2px; }
.t-unlock { margin-left: -1px; }
.darr { width: 0; height: 0; border: 4px solid transparent; border-top: 4px solid #000; border-bottom: 0; margin: 0 1px 0 7px; }
.cb {
  width: 20px; height: 19px; margin: 0 1px; border: 1px solid #7f879c; border-radius: 6px; flex: none;
  background: linear-gradient(#f8f8f8, #dcdcdc); display: flex; align-items: center; justify-content: center;
}
.cb svg { width: 14px; height: 14px; }

/* tab strip */
.tabstrip {
  height: 25px; flex: none; padding: 2px 0 0 4px; border-left: 2px solid #666;
  background: linear-gradient(#dbe4ea, #b3bfc7 85%, #8e979e);
}
.tab {
  width: 73px; height: 23px; background: #f8f8f8; border-radius: 5px 5px 0 0; margin-left: -2px;
  font: 700 12px/25px "Liberation Sans", sans-serif; color: #111; text-align: center;
}

/* workspace */
.work { height: 597px; flex: none; display: grid; grid-template-columns: 1346px 18px; grid-template-rows: 582px 15px; margin-left: 2px; border-bottom: 1px solid #808080; position: relative; }
.work::before { content: ""; position: absolute; left: -2px; top: 0; width: 2px; height: 582px; background: #666; }
.canvas { position: relative; overflow: hidden; background: #f8f8f8; }
.vscroll { display: flex; flex-direction: column; background: #d4d0c8; }
.hscroll { display: flex; background: #d4d0c8; }
.corner { background: #d4d0c8; }
.wbtn {
  flex: none; width: 17px; height: 15px; background: #d4d0c8; border: 1px solid; border-color: #fff #404040 #404040 #fff;
  display: flex; align-items: center; justify-content: center;
}
.wth { flex: 1; background: #d4d0c8; border: 1px solid; border-color: #fff #808080 #808080 #fff; }
.hatch { flex: none; background: repeating-conic-gradient(#d4d0c8 0 25%, #fff 0 50%) 0 0/2px 2px; }
.vscroll .hatch { height: 8px; }
.hscroll .hatch { width: 26px; }
.hscroll .wbtn { height: 14px; width: 16px; }
.au, .ad, .al, .ar { width: 0; height: 0; border: 4px solid transparent; }
.au { border-top: 0; border-bottom: 4px solid #000; }
.ad { border-bottom: 0; border-top: 4px solid #000; }
.al { border-left: 0; border-right: 4px solid #000; }
.ar { border-right: 0; border-left: 4px solid #000; }

/* objects */
.obj { position: absolute; background: #fff; border: 1px solid #111; border-radius: 8px; overflow: hidden; }
.cap {
  height: 18px; border-bottom: 1px solid #111; display: flex; align-items: center; padding-left: 6px; position: relative;
  background: linear-gradient(#f6f6f6 0, #efefef 30%, #dadada 50%, #e8e8e8 100%);
}
.cap.act { background: linear-gradient(#ededed 0, #dcdcdc 25%, #c8c8c8 55%, #d6d6d6 100%); }
.capt { font: 13px/16px "DejaVu Sans", Verdana, sans-serif; color: #3e3e3e; white-space: nowrap; }
.lens { width: 12px; height: 12px; position: absolute; right: 3px; top: 1px; }
.ctl { position: absolute; right: 1px; top: 1px; height: 15px; display: flex; align-items: center; }
.pr { width: 12px; height: 12px; margin-right: 3px; }
.xl { font: 14px/14px "Liberation Sans", sans-serif; color: #777; width: 11px; display: block; transform: scaleX(.68); transform-origin: left; margin-right: 4px; }
.mn { width: 8px; height: 3px; background: #333; align-self: flex-end; margin: 0 8px 2px 0; }
.mx { width: 12px; height: 12px; border: 1px solid #333; border-top-width: 2px; background: #f4f4f4; }

.rows { padding-bottom: 1px; position: relative; overflow: hidden; }
.li { height: 15px; padding-right: 3px; text-align: right; color: #333; line-height: 17px; background: #fff; font-size: 11px; }
.li.alt { background: #d9d9d9; }
.li.sel { background: #00ff00; }
.lb { left: 9px; width: 144px; }
.o-sp { top: 0; }
.o-yr { top: 70px; }
.o-sy { top: 140px; }
.o-rt { top: 180px; }
.o-pd { top: 295px; }
.o-mn { top: 450px; }
.o-id { top: 565px; height: 40px; }
.rows.scr { height: 130px; padding: 0; }
.rows.scr .li { padding-right: 13px; }
.lbar { position: absolute; right: 0; top: 0; bottom: 0; width: 13px; padding: 1px 1px 1px 2px; display: flex; flex-direction: column; background: #fff; }

.sb-b { flex: none; height: 10px; width: 10px; border: 1px solid #aaa; border-radius: 2px; background: linear-gradient(#fff, #ddd); position: relative; }
.sb-b::after { content: ""; position: absolute; left: 2px; top: 2px; width: 3px; height: 3px; border: solid #8a2a2a; border-width: 1px 0 0 1px; transform: rotate(45deg) translate(1px, 1px); }
.sb-b.dn { margin-top: auto; }
.sb-b.dn::after { transform: rotate(225deg) translate(-1px, -1px); left: 2px; top: 1px; }
.sb-th { flex: none; width: 10px; margin-top: 2px; border: 1px solid #b0b0b0; border-radius: 2px; background: linear-gradient(90deg, #d4d4d4, #c4c4c4); }
.h47 { height: 47px; }
.h108 { height: 108px; }
.h60 { height: 60px; }

.split { display: flex; align-items: flex-start; }
.tb { table-layout: fixed; border-collapse: separate; border-spacing: 0; flex: none; font: 11px "Liberation Sans", sans-serif; color: #333; }
.tb.fill { width: 100%; }
.o-t1 .tb { width: 139px; }
.o-big .tb { width: 466px; }
.w23 { width: 23px; } .w24 { width: 24px; } .w26 { width: 26px; } .w27 { width: 27px; } .w28 { width: 28px; }
.w30 { width: 30px; } .w32 { width: 32px; } .w33 { width: 33px; } .w40 { width: 40px; } .w41 { width: 41px; } .w43 { width: 43px; }
.w47 { width: 47px; } .w53 { width: 53px; } .w55 { width: 55px; } .w59 { width: 59px; } .w96 { width: 96px; } .w97 { width: 97px; } .w156 { width: 156px; }
.tb th, .tb td {
  height: 15px; padding: 2px 2px 0; border: solid #dcdcdc; border-width: 0 1px 1px 0; line-height: 12px;
  white-space: nowrap; overflow: hidden; text-align: left; position: relative; font-weight: 400;
}
.tb th { font: 700 10px/10px "DejaVu Sans", Verdana, sans-serif; color: #2c2c2c; background: #f3f3f3; padding-top: 4px; }
.tb th.wide { letter-spacing: .18px; }
.tb .r { text-align: right; }
.tb .b { font: 700 10px/12px "DejaVu Sans", Verdana, sans-serif; color: #111; }
.tb .ind { padding-left: 7px; }
.tb .sh { background: #f5f5f5; }
.tb tr:last-child td { border-bottom: 0; }
.tb tr > :last-child { border-right: 0; }
.o-t1 .tb tr > :last-child, .o-big .tb tr > :last-child { border-right: 1px solid #dcdcdc; }
.tot td { background: #f5f5f5; }
.pv td { background: #fff; }
.pv th:nth-child(-n+2) { background: #efefef; }
.sort {
  position: absolute; right: 1px; bottom: 1px; width: 10px; height: 9px; border-bottom: 1px solid #ccc;
  background:
    linear-gradient(to top left, transparent 42%, #c4c4c4 42%, #c4c4c4 58%, transparent 58%) 0 0/5px 8px no-repeat,
    linear-gradient(to top right, transparent 42%, #c4c4c4 42%, #c4c4c4 58%, transparent 58%) 100% 0/5px 8px no-repeat;
}
.sort.dn { transform: scaleY(-1); border-bottom-color: transparent; top: 3px; bottom: auto; }
.hled { width: 9px; height: 9px; position: absolute; right: 15px; top: 2px; }
.hled.end { right: 7px; }
.vbar { flex: 1; align-self: stretch; display: flex; flex-direction: column; padding: 0 1px; align-items: center; }
.vhd { width: 14px; height: 15px; background: #cfcfcf; flex: none; margin-bottom: 2px; }
.vbar .sb-b, .vbar .sb-th { width: 10px; }
.o-t1 .sb-b.dn { margin-bottom: 2px; }
.o-t1 { left: 182px; top: 2px; width: 152px; height: 350px; }
.o-t1 .split { height: 330px; }
.o-big { left: 597px; top: 312px; width: 480px; height: 300px; }
.o-big .split { height: 280px; }
.o-big .sb-b.dn { margin-top: 154px; }
.o-ytd { left: 345px; top: 125px; width: 194px; }
.o-max { left: 345px; top: 240px; width: 194px; }
.o-max2 { left: 342px; top: 341px; width: 194px; }
.o-max2 .tb tr:last-child td { background: #f5f5f5; }
.o-sum { left: 656px; top: 1px; width: 305px; }
.o-ng { left: 671px; top: 130px; width: 479px; }
.o-cs { left: 1129px; top: 2px; width: 300px; height: 143px; border-radius: 8px 0 0 0; }
.csbody { height: 123px; position: relative; }
.csrow { display: flex; align-items: center; height: 15px; padding-left: 1px; color: #333; }
.csf { width: 64px; }
.cse { width: 15px; height: 13px; margin-right: 4px; }
.csa { width: 0; height: 0; border: 3.500px solid transparent; border-top: 4px solid #222; border-bottom: 0; margin-right: 9px; }
.csl { width: 9px; height: 9px; margin-right: 7px; }
.cshs { position: absolute; left: 0; right: 0; bottom: 0; height: 11px; background: #fff; }
.csth { display: flex; align-items: center; justify-content: center; width: 167px; height: 11px; border: 1px solid #b4b4b4; background: linear-gradient(#f2f2f2, #cfcfcf); border-radius: 2px; }
.hgrip { width: 8px; height: 6px; background: repeating-linear-gradient(90deg, #888 0 1px, transparent 1px 2px); }
.blue {
  position: absolute; left: 559px; top: 227px; width: 136px; height: 41px; background: #d5e6f6; border-radius: 6px;
  text-align: center; line-height: 41px; color: #333; font-size: 11px;
}
.redbox { position: absolute; left: 634px; top: 111px; width: 541px; height: 165px; border: 5px solid #ed1c24; }

/* status */
.status { height: 23px; flex: none; display: flex; align-items: center; background: #d4d0c8; border-top: 1px solid #eeece6; padding-left: 3px; font-size: 11px; color: #222; }
.st-help { margin-right: auto; }
.cell { height: 18px; line-height: 16px; border: 1px solid #e2dfd8; flex: none; text-align: center; color: #222; }
.c-date { width: 138px; }
.c-gap { width: 8px; margin: 0 1px; }
.c-dim { width: 32px; }
.st-led { width: 11px; height: 11px; margin: 0 4px 0 5px; }

/* taskbar */
.taskbar { height: 27px; flex: none; display: flex; align-items: center; background: #d4d0c8; border-top: 1px solid #fff; padding-left: 2px; }
.start {
  width: 59px; height: 21px; padding: 0 0 0 1px; display: flex; align-items: center; background: #d4d0c8; border: 1px solid; border-color: #fff #404040 #404040 #fff;
  font: 700 12px "Liberation Sans", sans-serif; color: #111;
}
.s-logo { width: 17px; height: 15px; margin-right: 1px; }
.tsep { width: 9px; }
.tk {
  width: 32px; height: 21px; margin-right: 2px; display: flex; align-items: center; justify-content: center; background: #d4d0c8;
  border: 1px solid; border-color: #fff #404040 #404040 #fff; flex: none;
}
.tk svg { width: 17px; height: 17px; }
.tk.folder { width: 24px; margin-right: 0; }
.tk-edge { width: 8px; height: 21px; margin-right: 3px; border-left: 2px solid #404040; border-right: 2px solid #404040; background: #eee; flex: none; }
.tk.on { background: #fff; border-color: #404040 #fff #fff #404040; }
.lang { margin-left: auto; font-size: 12px; color: #222; margin-right: 5px; }
.vsep { width: 1px; height: 20px; background: #8a8882; box-shadow: 1px 0 #fff; margin-right: 7px; }
.kbd { width: 16px; height: 14px; margin-right: 7px; }
.tray { width: 153px; height: 22px; margin-right: 3px; display: flex; align-items: center; border: 1px solid; border-color: #808080 #fff #fff #808080; padding-left: 6px; font-size: 12px; color: #222; }
.chev { width: 10px; font: 9px/10px "DejaVu Sans", sans-serif; margin-right: 7px; }
.ti { width: 16px; height: 16px; margin-right: 7px; }
.clock { margin: 0 5px 0 4px; }
.ti.dsk { margin: 0; }
```
